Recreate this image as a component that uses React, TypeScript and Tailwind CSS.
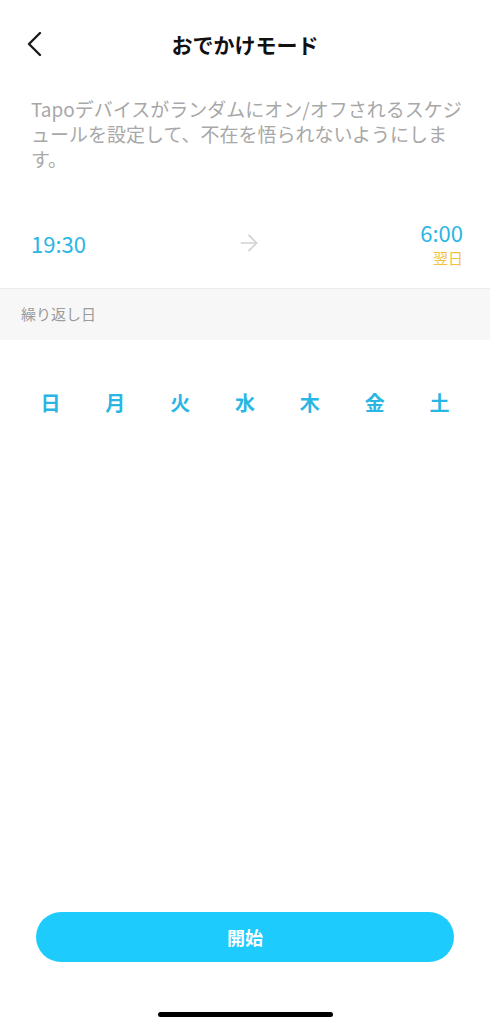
import { ArrowRight } from "lucide-react";

const days = ["日", "月", "火", "水", "木", "金", "土"];

export default function App() {
  return (
    <div className="flex min-h-[1024px] w-[490px] flex-col bg-white font-['Noto_Sans_CJK_JP','Noto_Sans',sans-serif]">
      {/* header */}
      <div className="relative flex h-[88px] items-center justify-center">
        <svg className="absolute left-[24px] top-[30px]" width="20" height="28" viewBox="0 0 20 28" fill="none">
          <path d="M16 3 L5 14 L16 25" stroke="#1a1a1a" strokeWidth="2.4" strokeLinecap="round" strokeLinejoin="round" />
        </svg>
        <h1 className="text-[21px] font-bold leading-7 text-[#111]">おでかけモード</h1>
      </div>

      <p className="mt-[8px] whitespace-nowrap pl-[31px] text-[19px] leading-[25px] text-[#a8a8a8]">
        Tapoデバイスがランダムにオン/オフされるスケジ
        <br />
        ュールを設定して、不在を悟られないようにしま
        <br />
        す。
      </p>

      {/* time range */}
      <div className="mt-[27px] grid h-[91px] grid-cols-3 items-center border-b border-[#ececec] pl-[31px] pr-[27px]">
        <div className="text-[22px] leading-7 text-[#2ab6e4]">19:30</div>
        <div className="flex justify-center pl-[4px]">
          <ArrowRight size={26} strokeWidth={1.6} color="#d2d2d2" />
        </div>
        <div className="flex flex-col items-end">
          <div className="text-[22px] leading-7 text-[#2ab6e4]">6:00</div>
          <div className="mt-[2px] text-[15px] leading-5 text-[#f2c23c]">翌日</div>
        </div>
      </div>

      <div className="flex h-[51px] items-center bg-[#f7f7f7] px-[21px] text-[15px] text-[#9c9c9c]">繰り返し日</div>

      <div className="mt-[49px] grid grid-cols-7 px-[18px]">
        {days.map((d) => (
          <div key={d} className="text-center text-[20px] font-bold leading-7 text-[#29b6e4]">
            {d}
          </div>
        ))}
      </div>

      <div className="flex-1" />

      <div className="px-[34px]">
        <button className="mx-auto flex h-[50px] w-[418px] items-center justify-center rounded-full bg-[#1ecbfd] text-[18px] font-bold text-white">
          開始
        </button>
      </div>

      <div className="mt-[50px] mb-[7px] flex justify-center">
        <div className="h-[5px] w-[175px] rounded-full bg-black" />
      </div>
    </div>
  );
}
